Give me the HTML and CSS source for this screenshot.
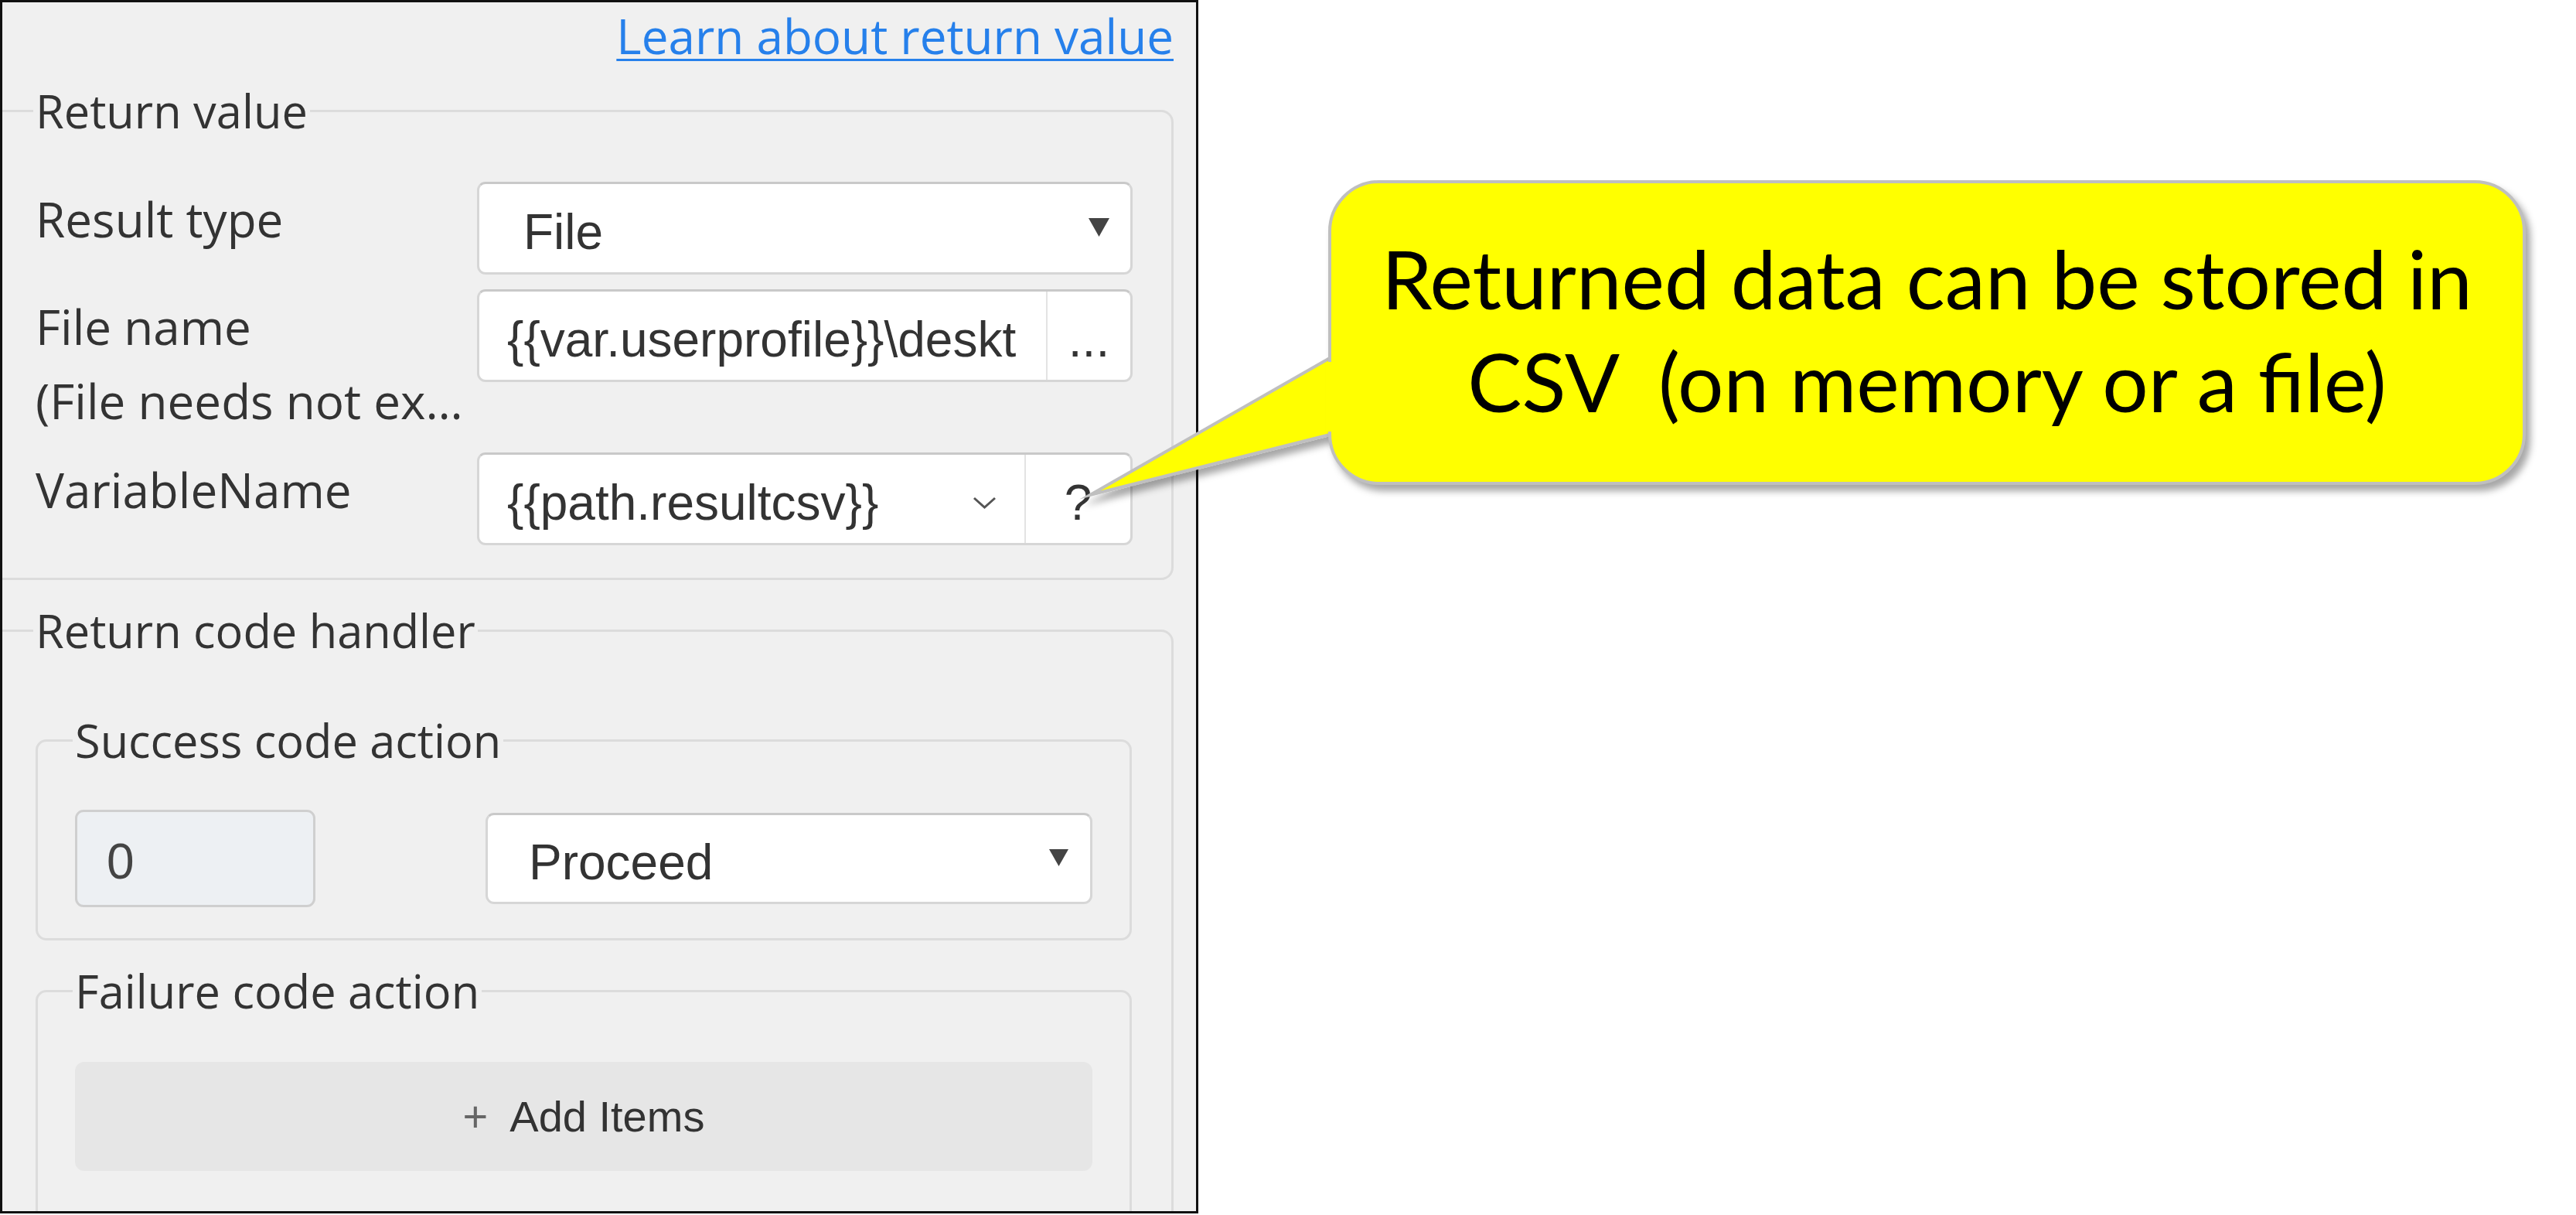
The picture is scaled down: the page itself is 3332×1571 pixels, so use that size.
FILE: index.html
```html
<!DOCTYPE html>
<html lang="en">
<head>
<meta charset="utf-8">
<title>Return value</title>
<link rel="stylesheet" href="styles.css">
</head>
<body>
<div class="panel">
  <div class="link-row"><a class="learn" href="#">Learn about return value</a></div>

  <fieldset class="group">
    <legend>Return value</legend>
    <div class="form-grid">
      <div class="label">Result type</div>
      <div class="select">
        <span class="select-text">File</span>
        <svg class="caret" width="29" height="26" viewBox="0 0 29 26"><polygon points="1,1 28,1 14.5,25" fill="#444"/></svg>
      </div>

      <div class="label">File name<br>(File needs not ex…</div>
      <div class="input-group">
        <div class="ig-main file-main"><span class="ig-text">{{var.userprofile}}\deskt</span></div>
        <div class="ig-btn dots-btn">...</div>
      </div>

      <div class="label">VariableName</div>
      <div class="input-group">
        <div class="ig-main var-main">
          <span class="ig-text">{{path.resultcsv}}</span>
          <svg class="chevron" width="31" height="16" viewBox="0 0 31 16"><polyline points="2,2 15.5,14 29,2" fill="none" stroke="#555" stroke-width="3"/></svg>
        </div>
        <div class="ig-btn help-btn">?</div>
      </div>
    </div>
  </fieldset>

  <fieldset class="group handler">
    <legend>Return code handler</legend>
    <fieldset class="sub success">
      <legend>Success code action</legend>
      <div class="code-row">
        <div class="code-input">0</div>
        <div class="select proceed">
          <span class="select-text">Proceed</span>
          <svg class="caret" width="27" height="24" viewBox="0 0 27 24"><polygon points="1,1 26,1 13.5,23" fill="#444"/></svg>
        </div>
      </div>
    </fieldset>
    <fieldset class="sub failure">
      <legend>Failure code action</legend>
      <button class="add-btn" type="button"><span class="plus">+</span>Add Items</button>
    </fieldset>
  </fieldset>
</div>

<svg class="tail" width="340" height="230" viewBox="0 0 340 230">
  <defs>
    <filter id="tailshadow" x="-20%" y="-20%" width="150%" height="160%">
      <feDropShadow dx="6" dy="8" stdDeviation="5" flood-color="#000" flood-opacity="0.35"/>
    </filter>
  </defs>
  <polygon points="320,23 10,200 320,122" fill="#ffff00" stroke="#bfbfbf" stroke-width="4" stroke-linejoin="miter" stroke-miterlimit="12" filter="url(#tailshadow)"/>
</svg>

<div class="callout">
  <div class="callout-line">Returned data can be stored in</div>
  <div class="callout-line">CSV&nbsp; (on memory or a file)</div>
</div>

<svg class="tail-cover" width="340" height="230" viewBox="0 0 340 230">
  <rect x="315" y="28" width="19" height="90" fill="#ffff00"/>
</svg>
</body>
</html>
```

FILE: styles.css
```css
html, body {
  margin: 0;
  padding: 0;
  background: #ffffff;
}

body {
  width: 3332px;
  height: 1571px;
  overflow: hidden;
  font-family: "Open Sans", "Noto Sans", sans-serif;
  color: #333333;
}

.panel {
  box-sizing: border-box;
  width: 1550px;
  height: 1569px;
  border: 3px solid #111111;
  background: #f0f0f0;
  overflow: hidden;
}

.link-row {
  padding: 1px 29px 0 0;
  text-align: right;
  font-size: 62px;
  line-height: 84px;
}

.learn {
  color: #2680eb;
  text-decoration: underline;
  text-decoration-thickness: 3px;
  text-underline-offset: 6px;
}

fieldset {
  margin: 0;
  min-width: 0;
}

legend {
  font-family: "Open Sans", "Noto Sans", sans-serif;
  font-size: 59.5px;
  line-height: 84px;
  padding: 0 3px;
  margin-left: -3px;
  color: #333333;
}

.group {
  margin: 13px 29px 0 0;
  padding: 50px 50px 42px 43px;
  border: 3px solid #dcdcdc;
  border-left: none;
  border-radius: 0 16px 16px 0;
}

.handler {
  margin-top: 23px;
  padding: 58px 51px 40px 43px;
}

.form-grid {
  display: grid;
  grid-template-columns: 571px 848px;
  row-gap: 19px;
  align-items: start;
}

.label {
  font-size: 62px;
  line-height: 96px;
  color: #333333;
  white-space: nowrap;
}

.select {
  box-sizing: border-box;
  height: 120px;
  display: flex;
  align-items: center;
  justify-content: space-between;
  padding: 10px 26px 0 57px;
  background: #ffffff;
  border: 3px solid #d6d6d6;
  border-top-color: #c9c9c9;
  border-radius: 11px;
  font-family: "Liberation Sans", Arial, sans-serif;
  font-size: 64px;
  color: #333333;
}

.caret {
  display: block;
  margin-top: -12px;
}

.input-group {
  box-sizing: border-box;
  height: 120px;
  display: flex;
  background: #ffffff;
  border: 3px solid #d6d6d6;
  border-top-color: #c9c9c9;
  border-radius: 11px;
  overflow: hidden;
  font-family: "Liberation Sans", Arial, sans-serif;
  font-size: 64px;
  color: #333333;
}

.ig-main {
  flex: 1;
  min-width: 0;
  display: flex;
  align-items: center;
  padding: 10px 39px 0 36px;
}

.var-main {
  padding-right: 36px;
}

.ig-text {
  flex: 1;
  min-width: 0;
  overflow: hidden;
  white-space: nowrap;
}

.chevron {
  display: block;
  flex: none;
}

.ig-btn {
  flex: none;
  display: flex;
  align-items: center;
  justify-content: center;
  padding-top: 10px;
  border-left: 2px solid #e3e3e3;
  box-sizing: border-box;
}

.dots-btn {
  width: 109px;
}

.help-btn {
  width: 137px;
}

.sub {
  margin: 0;
  padding: 48px 48px 40px 48px;
  border: 3px solid #dcdcdc;
  border-radius: 14px;
}

.failure {
  margin-top: 23px;
  padding-top: 50px;
  padding-bottom: 120px;
}

.code-row {
  display: flex;
  align-items: center;
  justify-content: space-between;
}

.code-input {
  box-sizing: border-box;
  width: 311px;
  height: 126px;
  display: flex;
  align-items: center;
  padding: 8px 0 0 38px;
  background: #edf0f3;
  border: 3px solid #cfcfcf;
  border-radius: 11px;
  font-family: "Liberation Sans", Arial, sans-serif;
  font-size: 64px;
  color: #444444;
}

.proceed {
  width: 785px;
  height: 118px;
  padding-left: 53px;
  padding-right: 27px;
}

.add-btn {
  display: flex;
  align-items: center;
  justify-content: center;
  width: 100%;
  height: 141px;
  padding: 0;
  border: none;
  border-radius: 12px;
  background: #e6e6e6;
  font-family: "Liberation Sans", Arial, sans-serif;
  font-size: 56px;
  color: #333333;
}

.plus {
  color: #666666;
  margin-right: 28px;
}

.tail {
  position: absolute;
  left: 1400px;
  top: 440px;
  z-index: 1;
  overflow: visible;
}

.callout {
  position: absolute;
  left: 1718px;
  top: 233px;
  z-index: 2;
  box-sizing: border-box;
  width: 1549px;
  height: 394px;
  padding-bottom: 8px;
  display: flex;
  flex-direction: column;
  justify-content: center;
  align-items: center;
  background: #ffff00;
  border: 4px solid #bfbfbf;
  border-radius: 66px;
  box-shadow: 6px 8px 10px rgba(0, 0, 0, 0.35);
  font-family: Lato, "Open Sans", sans-serif;
  font-size: 105px;
  line-height: 133px;
  color: #000000;
  white-space: nowrap;
}

.tail-cover {
  position: absolute;
  left: 1400px;
  top: 440px;
  z-index: 3;
}
```
